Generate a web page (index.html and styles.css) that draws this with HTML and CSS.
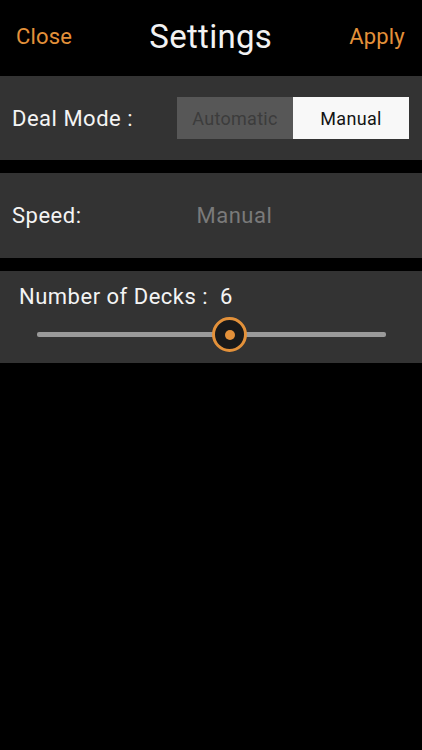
FILE: index.html
```html
<!DOCTYPE html>
<html>
<head>
<meta charset="utf-8">
<link rel="stylesheet" href="styles.css">
</head>
<body>
<div class="screen">
  <header class="topbar">
    <span class="link">Close</span>
    <span class="title">Settings</span>
    <span class="link">Apply</span>
  </header>
  <section class="panel deal">
    <span class="label">Deal Mode :</span>
    <div class="segmented">
      <span class="seg off">Automatic</span>
      <span class="seg on">Manual</span>
    </div>
  </section>
  <section class="panel speed">
    <span class="label">Speed:</span>
    <span class="value">Manual</span>
  </section>
  <section class="panel decks">
    <span class="label">Number of Decks :&nbsp; 6</span>
    <div class="slider">
      <div class="track"></div>
      <div class="thumb"><div class="dot"></div></div>
    </div>
  </section>
</div>
</body>
</html>
```
FILE: styles.css
```css
html, body {
  margin: 0;
  padding: 0;
  background: #000;
}
.screen {
  width: 422px;
  height: 750px;
  background: #000;
  font-family: Roboto, "Noto Sans", sans-serif;
  display: flex;
  flex-direction: column;
}
.topbar {
  height: 76px;
  display: flex;
  align-items: center;
  justify-content: space-between;
  padding: 0 17px 4px 16px;
  box-sizing: border-box;
}
.link {
  color: #e3913a;
  font-size: 22px;
  letter-spacing: 0.2px;
}
.title {
  color: #f2f2f2;
  font-size: 33px;
  letter-spacing: 0.3px;
}
.panel {
  background: #333333;
  display: flex;
  box-sizing: border-box;
}
.label {
  color: #f4f4f4;
  font-size: 22px;
  letter-spacing: 0.5px;
}
.deal {
  height: 84px;
  align-items: center;
  justify-content: space-between;
  padding: 0 13px 0 12px;
}
.segmented {
  display: flex;
  height: 42px;
}
.seg {
  width: 116px;
  display: flex;
  align-items: center;
  justify-content: center;
  font-size: 18px;
  letter-spacing: 0.3px;
}
.seg.off {
  background: #575757;
  color: #3c3c3c;
}
.seg.on {
  background: #f8f8f8;
  color: #141414;
}
.speed {
  margin-top: 13px;
  height: 85px;
  align-items: center;
  padding-left: 12px;
}
.speed .value {
  color: #7a7a7a;
  font-size: 22px;
  letter-spacing: 0.5px;
  margin-left: 115px;
}
.decks {
  margin-top: 13px;
  height: 92px;
  flex-direction: column;
  padding: 13px 36px 0 19px;
}
.slider {
  position: relative;
  height: 36px;
  margin-top: 8px;
  margin-left: 18px;
}
.track {
  position: absolute;
  left: 0;
  right: 0;
  top: 15px;
  height: 5px;
  background: #9a9a9a;
  border-radius: 2px;
}
.thumb {
  position: absolute;
  left: 175px;
  top: 0;
  width: 29px;
  height: 29px;
  border: 3px solid #e3913a;
  border-radius: 50%;
  background: #1a1a1a;
  display: flex;
  align-items: center;
  justify-content: center;
}
.dot {
  width: 10px;
  height: 10px;
  border-radius: 50%;
  background: #e3913a;
}
```
